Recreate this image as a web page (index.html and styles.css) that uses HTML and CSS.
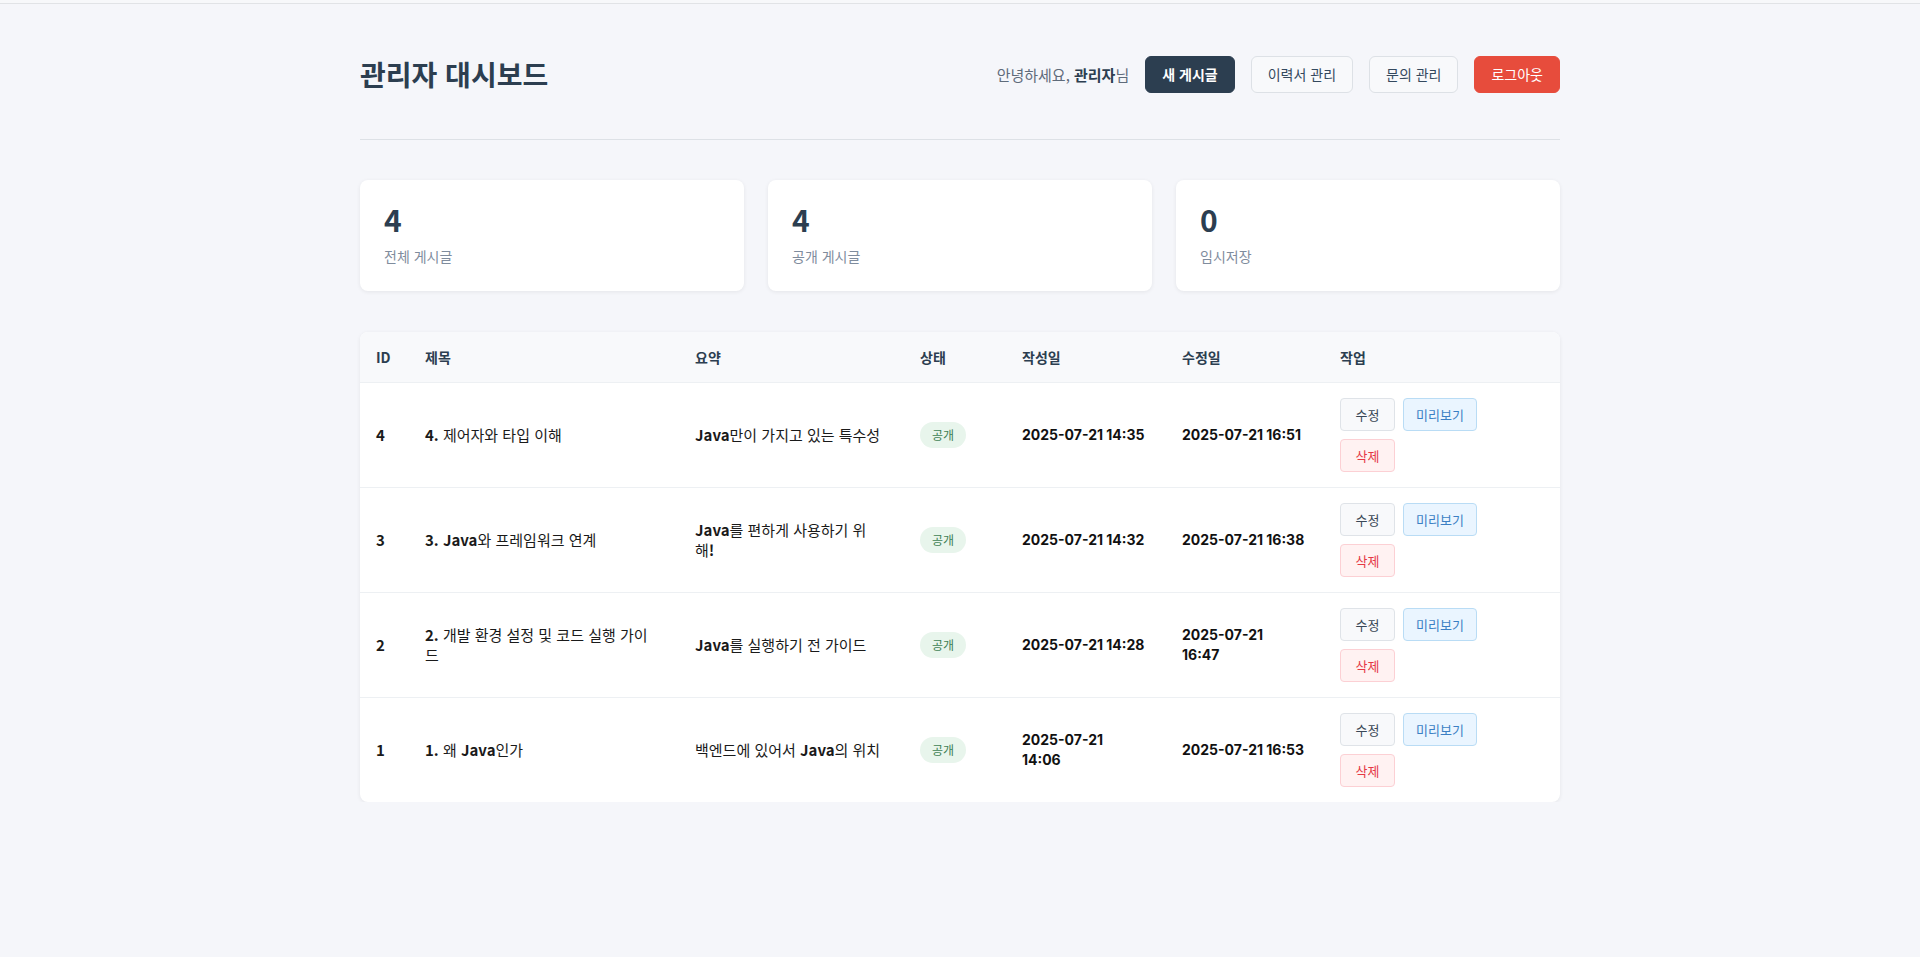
FILE: index.html
```html
<!DOCTYPE html>
<html lang="ko">
<head>
<meta charset="utf-8">
<title>관리자 대시보드</title>
<link rel="stylesheet" href="styles.css">
</head>
<body>
<div class="topbar"></div>
<main class="container">
  <header class="page-header">
    <h1 class="page-title">관리자 대시보드</h1>
    <div class="header-actions">
      <span class="greeting">안녕하세요, <strong>관리자</strong>님</span>
      <button class="btn btn-primary">새 게시글</button>
      <button class="btn btn-outline">이력서 관리</button>
      <button class="btn btn-outline">문의 관리</button>
      <button class="btn btn-danger">로그아웃</button>
    </div>
  </header>

  <section class="stats">
    <div class="stat-card">
      <div class="stat-number">4</div>
      <div class="stat-label">전체 게시글</div>
    </div>
    <div class="stat-card">
      <div class="stat-number">4</div>
      <div class="stat-label">공개 게시글</div>
    </div>
    <div class="stat-card">
      <div class="stat-number">0</div>
      <div class="stat-label">임시저장</div>
    </div>
  </section>

  <section class="table-card">
    <table class="posts">
      <colgroup>
        <col class="c-id"><col class="c-title"><col class="c-summary"><col class="c-status"><col class="c-date"><col class="c-date2"><col class="c-actions">
      </colgroup>
      <thead>
        <tr><th>ID</th><th>제목</th><th>요약</th><th>상태</th><th>작성일</th><th>수정일</th><th>작업</th></tr>
      </thead>
      <tbody>
        <tr>
          <td class="id">4</td>
          <td><b>4.</b> 제어자와 타입 이해</td>
          <td><b>Java</b>만이 가지고 있는 특수성</td>
          <td><span class="badge">공개</span></td>
          <td class="date">2025-07-21 14:35</td>
          <td class="date">2025-07-21 16:51</td>
          <td><div class="actions"><button class="abtn edit">수정</button><button class="abtn preview">미리보기</button><button class="abtn del">삭제</button></div></td>
        </tr>
        <tr>
          <td class="id">3</td>
          <td><b>3. Java</b>와 프레임워크 연계</td>
          <td><b>Java</b>를 편하게 사용하기 위<br>해<b>!</b></td>
          <td><span class="badge">공개</span></td>
          <td class="date">2025-07-21 14:32</td>
          <td class="date">2025-07-21 16:38</td>
          <td><div class="actions"><button class="abtn edit">수정</button><button class="abtn preview">미리보기</button><button class="abtn del">삭제</button></div></td>
        </tr>
        <tr>
          <td class="id">2</td>
          <td><b>2.</b> 개발 환경 설정 및 코드 실행 가이<br>드</td>
          <td><b>Java</b>를 실행하기 전 가이드</td>
          <td><span class="badge">공개</span></td>
          <td class="date">2025-07-21 14:28</td>
          <td class="date">2025-07-21<br>16:47</td>
          <td><div class="actions"><button class="abtn edit">수정</button><button class="abtn preview">미리보기</button><button class="abtn del">삭제</button></div></td>
        </tr>
        <tr>
          <td class="id">1</td>
          <td><b>1.</b> 왜 <b>Java</b>인가</td>
          <td>백엔드에 있어서 <b>Java</b>의 위치</td>
          <td><span class="badge">공개</span></td>
          <td class="date">2025-07-21<br>14:06</td>
          <td class="date">2025-07-21 16:53</td>
          <td><div class="actions"><button class="abtn edit">수정</button><button class="abtn preview">미리보기</button><button class="abtn del">삭제</button></div></td>
        </tr>
      </tbody>
    </table>
  </section>
</main>
</body>
</html>
```

FILE: styles.css
```css
* { box-sizing: border-box; }

html, body {
  margin: 0;
  padding: 0;
}

body {
  background: #f5f6fa;
  font-family: "Noto Sans CJK KR", "Noto Sans", sans-serif;
  color: #222;
  font-size: 14px;
}

.topbar {
  height: 4px;
  background: #f7f8fa;
  border-bottom: 1px solid #e1e3e6;
}

.container {
  width: 1200px;
  margin: 0 auto;
  padding-top: 50px;
}

.page-header {
  display: flex;
  align-items: center;
  justify-content: space-between;
  height: 40px;
  box-sizing: content-box;
  padding-bottom: 45px;
  border-bottom: 1px solid #dde1e6;
}

.page-title {
  margin: 0;
  font-size: 28px;
  font-weight: 700;
  color: #2c3e50;
  line-height: 40px;
}

.header-actions {
  display: flex;
  align-items: center;
  gap: 16px;
}

.greeting {
  color: #5f6b7a;
  font-size: 15px;
}

.greeting strong {
  color: #2c3e50;
  font-weight: 700;
}

.btn {
  font-family: inherit;
  font-size: 14px;
  line-height: 21px;
  padding: 7px 16px;
  border-radius: 6px;
  border: 1px solid transparent;
  cursor: pointer;
}

.btn-primary {
  background: #2c3e50;
  color: #fff;
  font-weight: 700;
  border-color: #2c3e50;
}

.btn-outline {
  background: #f8f9fb;
  color: #34495e;
  border-color: #dde1e6;
}

.btn-danger {
  background: #e74c3c;
  color: #fff;
  border-color: #e74c3c;
}

.stats {
  display: grid;
  grid-template-columns: repeat(3, 1fr);
  gap: 24px;
  margin-top: 40px;
}

.stat-card {
  background: #fff;
  border-radius: 8px;
  padding: 21px 24px 24px;
  height: 111px;
  box-shadow: 0 1px 4px rgba(0, 0, 0, 0.07);
}

.stat-number {
  font-size: 30px;
  font-weight: 700;
  color: #2c3e50;
  line-height: 36px;
}

.stat-label {
  margin-top: 9px;
  font-size: 14px;
  line-height: 21px;
  color: #7f8c9d;
}

.table-card {
  margin-top: 41px;
  background: #fff;
  border-radius: 8px;
  box-shadow: 0 1px 4px rgba(0, 0, 0, 0.07);
  overflow: hidden;
}

.posts {
  width: 100%;
  border-collapse: collapse;
  table-layout: fixed;
}

.c-id { width: 49px; }
.c-title { width: 270px; }
.c-summary { width: 225px; }
.c-status { width: 102px; }
.c-date { width: 160px; }
.c-date2 { width: 158px; }
.c-actions { width: 236px; }

.posts th {
  text-align: left;
  background: #f8f9fb;
  color: #2c3e50;
  font-weight: 700;
  font-size: 14px;
  line-height: 18px;
  padding: 16px;
  border-bottom: 1px solid #edf0f3;
}

.posts td {
  padding: 15px 16px;
  vertical-align: middle;
  font-size: 15px;
  line-height: 20px;
  border-bottom: 1px solid #edf0f3;
  color: #1a1a1a;
}

.posts tbody tr:last-child td {
  border-bottom: none;
}

.posts td b {
  font-weight: 700;
}

.posts td.id {
  font-weight: 700;
}

.posts td.date {
  font-family: Inter, "Noto Sans", sans-serif;
  font-size: 14px;
  font-weight: 700;
  white-space: nowrap;
  color: #111;
}

.badge {
  display: inline-block;
  background: #e8f5ec;
  color: #3f7f55;
  font-size: 12px;
  line-height: 18px;
  padding: 4px 12px;
  border-radius: 13px;
}

.actions {
  display: flex;
  flex-wrap: wrap;
  column-gap: 8px;
  row-gap: 8px;
  width: 150px;
}

.abtn {
  font-family: inherit;
  font-size: 13px;
  line-height: 19px;
  padding: 6px 12px;
  border-radius: 4px;
  border: 1px solid;
  cursor: pointer;
}

.abtn.edit,
.abtn.del {
  min-width: 55px;
}

.abtn.edit {
  background: #f8f9fb;
  border-color: #dfe3e8;
  color: #3a4756;
}

.abtn.preview {
  background: #eaf5ff;
  border-color: #b9dcf5;
  color: #3b7fc4;
}

.abtn.del {
  background: #fff2f2;
  border-color: #fcd0d4;
  color: #e53945;
}
```
